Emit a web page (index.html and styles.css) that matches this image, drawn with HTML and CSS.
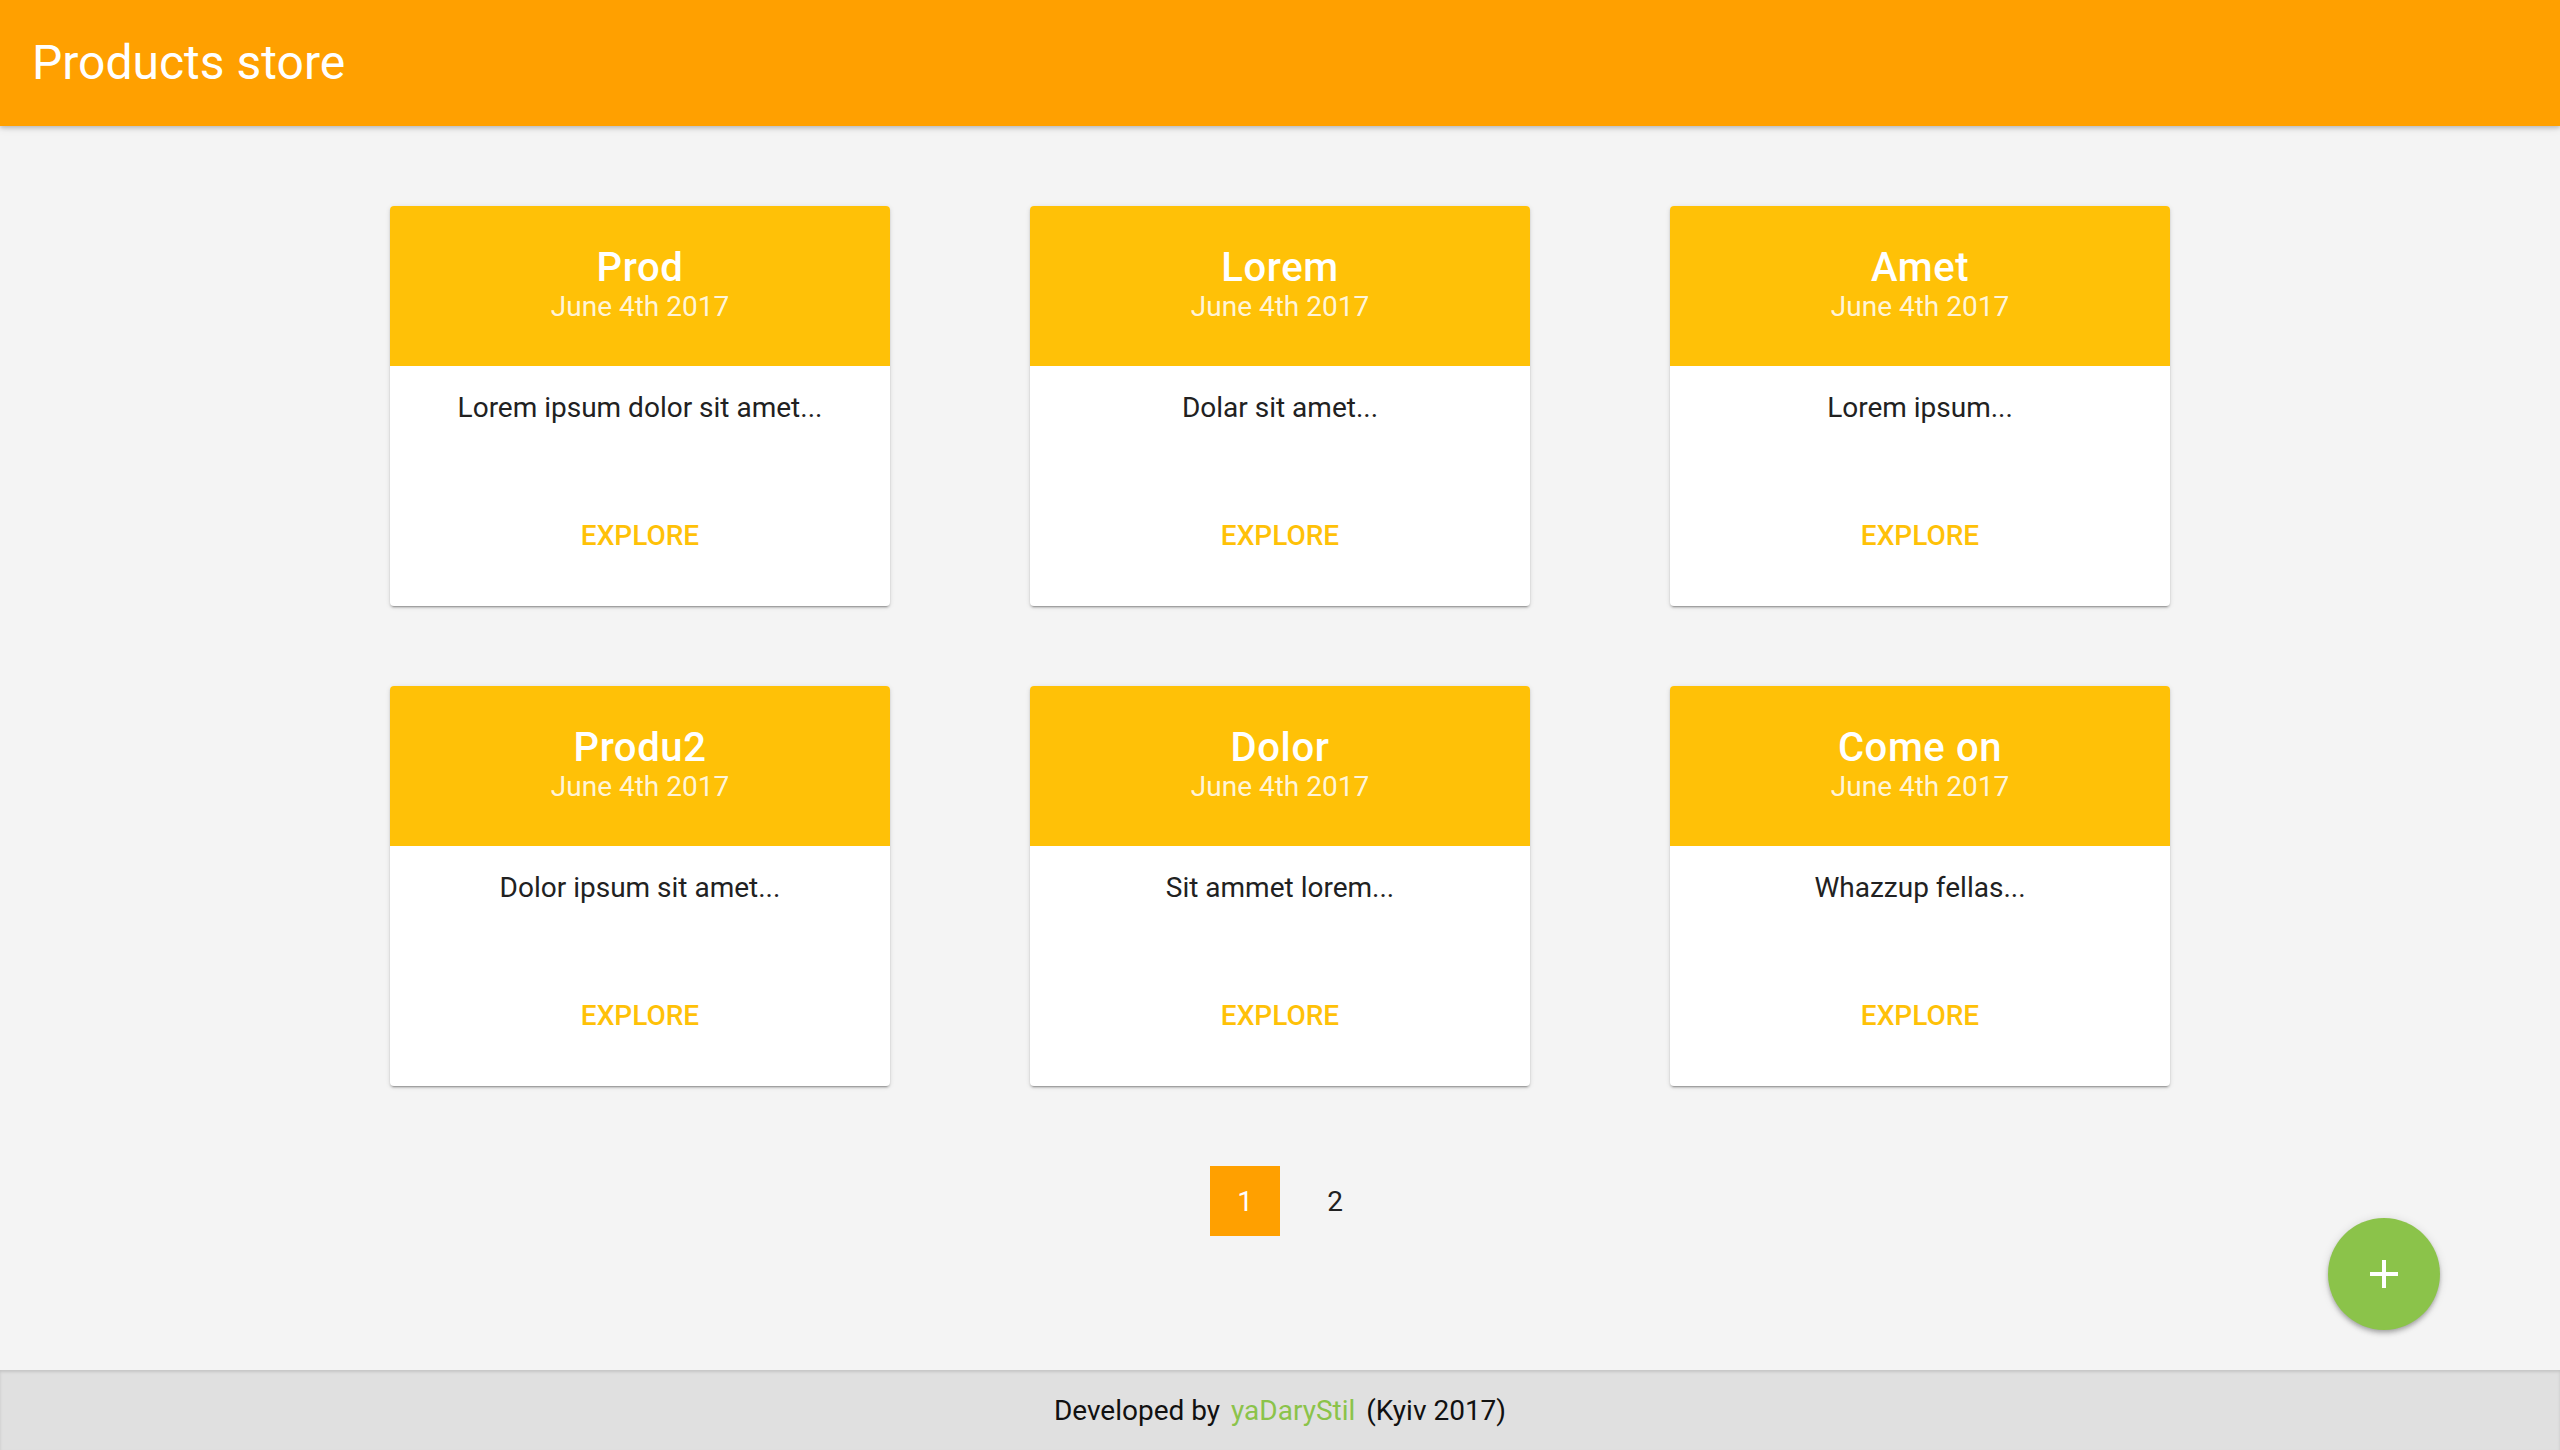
FILE: index.html
```html
<!DOCTYPE html>
<html lang="en">
<head>
<meta charset="utf-8">
<title>Products store</title>
<link rel="stylesheet" href="styles.css">
</head>
<body>
<header class="topbar"><span class="topbar-title">Products store</span></header>
<main class="content">
  <section class="grid">
    <article class="card"><div class="card-head"><h2 class="card-title">Prod</h2><div class="card-date">June 4th 2017</div></div><div class="card-body"><p class="card-text">Lorem ipsum dolor sit amet...</p><div class="card-actions"><a class="explore">EXPLORE</a></div></div></article>
    <article class="card"><div class="card-head"><h2 class="card-title">Lorem</h2><div class="card-date">June 4th 2017</div></div><div class="card-body"><p class="card-text">Dolar sit amet...</p><div class="card-actions"><a class="explore">EXPLORE</a></div></div></article>
    <article class="card"><div class="card-head"><h2 class="card-title">Amet</h2><div class="card-date">June 4th 2017</div></div><div class="card-body"><p class="card-text">Lorem ipsum...</p><div class="card-actions"><a class="explore">EXPLORE</a></div></div></article>
    <article class="card"><div class="card-head"><h2 class="card-title">Produ2</h2><div class="card-date">June 4th 2017</div></div><div class="card-body"><p class="card-text">Dolor ipsum sit amet...</p><div class="card-actions"><a class="explore">EXPLORE</a></div></div></article>
    <article class="card"><div class="card-head"><h2 class="card-title">Dolor</h2><div class="card-date">June 4th 2017</div></div><div class="card-body"><p class="card-text">Sit ammet lorem...</p><div class="card-actions"><a class="explore">EXPLORE</a></div></div></article>
    <article class="card"><div class="card-head"><h2 class="card-title">Come on</h2><div class="card-date">June 4th 2017</div></div><div class="card-body"><p class="card-text">Whazzup fellas...</p><div class="card-actions"><a class="explore">EXPLORE</a></div></div></article>
  </section>
  <nav class="pager">
    <span class="page page-active">1</span>
    <span class="page">2</span>
  </nav>
</main>
<button class="fab" aria-label="Add"><svg width="28" height="28" viewBox="0 0 28 28"><rect x="12" y="0" width="4" height="28" fill="#fff"/><rect x="0" y="12" width="28" height="4" fill="#fff"/></svg></button>
<footer class="footer">Developed by <a class="footer-link">yaDaryStil</a> (Kyiv 2017)</footer>
</body>
</html>
```
FILE: styles.css
```css
html, body { margin: 0; padding: 0; }
body {
  font-family: Roboto, "Noto Sans", sans-serif;
  background: #f4f4f4;
  color: #212121;
  min-height: 100vh;
  display: flex;
  flex-direction: column;
}
.topbar {
  height: 126px;
  background: #ffa000;
  display: flex;
  align-items: center;
  padding-left: 32px;
  box-shadow: 0 2px 4px rgba(0,0,0,0.18), 0 3px 8px rgba(0,0,0,0.08);
  position: relative;
  z-index: 2;
}
.topbar-title {
  color: #fff;
  font-size: 48px;
  font-weight: 400;
  line-height: 1;
}
.content {
  flex: 1;
  padding-top: 80px;
  display: flex;
  flex-direction: column;
  align-items: center;
}
.grid {
  display: grid;
  grid-template-columns: repeat(3, 500px);
  column-gap: 140px;
  row-gap: 80px;
}
.card {
  width: 500px;
  height: 400px;
  background: #fff;
  border-radius: 4px;
  overflow: hidden;
  display: flex;
  flex-direction: column;
  box-shadow: 0 2px 2px 0 rgba(0,0,0,.14), 0 3px 1px -2px rgba(0,0,0,.2), 0 1px 5px 0 rgba(0,0,0,.12);
}
.card-head {
  height: 160px;
  background: #ffc107;
  color: #fff;
  display: flex;
  flex-direction: column;
  align-items: center;
  justify-content: center;
  padding-bottom: 2px;
  box-sizing: border-box;
}
.card-title {
  margin: 0;
  font-size: 40px;
  font-weight: 500;
  line-height: 44px;
  letter-spacing: 0.6px;
}
.card-date {
  font-size: 28px;
  font-weight: 400;
  line-height: 34px;
  color: rgba(255,255,255,0.86);
}
.card-body {
  flex: 1;
  display: flex;
  flex-direction: column;
  align-items: center;
  padding-top: 22px;
}
.card-text {
  margin: 0;
  font-size: 28px;
  line-height: 40px;
  color: #212121;
}
.card-actions {
  margin-top: auto;
  padding-bottom: 50px;
}
.explore {
  font-size: 28px;
  line-height: 40px;
  font-weight: 500;
  color: #ffc107;
  display: block;
}
.pager {
  display: flex;
  gap: 20px;
  margin-top: 80px;
  padding-left: 20px;
}
.page {
  width: 70px;
  height: 70px;
  display: flex;
  align-items: center;
  justify-content: center;
  font-size: 28px;
  color: #212121;
}
.page-active {
  background: #ffa000;
  color: #fff;
}
.fab {
  position: fixed;
  right: 120px;
  bottom: 120px;
  width: 112px;
  height: 112px;
  border-radius: 50%;
  border: none;
  padding: 0;
  background: #8bc34a;
  display: flex;
  align-items: center;
  justify-content: center;
  box-shadow: 0 4px 5px 0 rgba(0,0,0,.14), 0 1px 10px 0 rgba(0,0,0,.12), 0 2px 4px -1px rgba(0,0,0,.2);
  z-index: 3;
}
.footer {
  margin-top: 134px;
  height: 80px;
  background: #e0e0e0;
  display: flex;
  align-items: center;
  justify-content: center;
  font-size: 28px;
  color: #111;
  box-shadow: inset 0 2px 3px rgba(0,0,0,0.12);
  white-space: pre;
}
.footer-link {
  color: #8bc34a;
  margin: 0 4px;
}
```
